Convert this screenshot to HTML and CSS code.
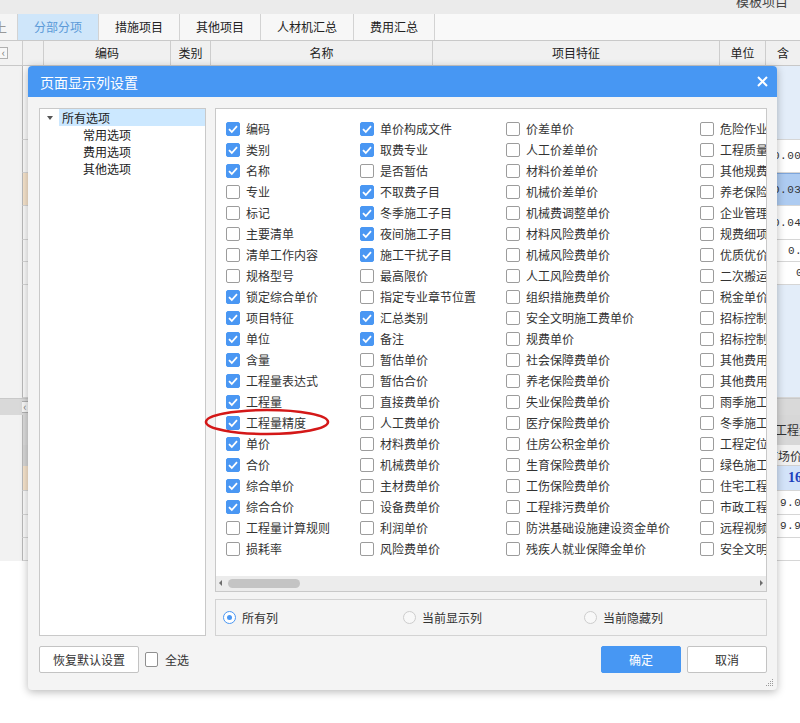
FILE: index.html
```html
<!DOCTYPE html>
<html lang="zh-CN">
<head>
<meta charset="utf-8">
<title>页面显示列设置</title>
<link rel="stylesheet" href="styles.css">
</head>
<body>
<div class="app">
  <div class="topbar"><span class="proj">模板项目</span></div>
  <div class="tabs">
    <div class="tab-stub">上</div>
    <div class="tab active">分部分项</div>
    <div class="tab">措施项目</div>
    <div class="tab">其他项目</div>
    <div class="tab">人材机汇总</div>
    <div class="tab">费用汇总</div>
    <div class="tab-fill"></div>
  </div>
  <div class="ghead">
    <div class="gut"><span class="collapse">&lsaquo;</span></div>
    <div class="hc w21"></div>
    <div class="hc w127">编码</div>
    <div class="hc w40">类别</div>
    <div class="hc w222">名称</div>
    <div class="hc w287">项目特征</div>
    <div class="hc w46">单位</div>
    <div class="hc wrest">含</div>
  </div>
  <div class="row h74 blue-l"><div class="gut"></div><div class="ind"></div><div class="rc"></div></div>
  <div class="row h33"><div class="gut"></div><div class="ind"></div><div class="rc"><span class="num n1">0.009</span></div></div>
  <div class="row h33 sel"><div class="gut"></div><div class="ind"></div><div class="rc"><span class="num n1">0.039</span></div></div>
  <div class="row h34"><div class="gut"></div><div class="ind"></div><div class="rc"><span class="num n1">0.042</span></div></div>
  <div class="row h22"><div class="gut"></div><div class="ind"></div><div class="rc"><span class="num n2">0.</span></div></div>
  <div class="row h23"><div class="gut"></div><div class="ind"></div><div class="rc"><span class="num n3">0</span></div></div>
  <div class="row h113 blue-l"><div class="gut"></div><div class="ind"></div><div class="rc"></div></div>
  <div class="splitter"><span class="collapse">&lsaquo;</span></div>
  <div class="ltabs"><div class="gut"></div><div class="ind"></div><div class="lt"><span class="lt-text">工程量</span></div></div>
  <div class="lhead"><div class="gut"></div><div class="ind g"></div><div class="lh"><span class="lh-text">市场价</span></div></div>
  <div class="row h25 sel2"><div class="gut"></div><div class="ind"></div><div class="rc"><span class="num n4">16</span></div></div>
  <div class="row h24"><div class="gut"></div><div class="ind"></div><div class="rc"><span class="num n5">9.0</span></div></div>
  <div class="row h23"><div class="gut"></div><div class="ind"></div><div class="rc"><span class="num n5">9.9</span></div></div>
  <div class="row h23"><div class="gut"></div><div class="ind"></div><div class="rc"></div></div>
</div>

<div class="dialog">
  <div class="dlg-title">
    <span>页面显示列设置</span>
    <svg class="close" width="11" height="11" viewBox="0 0 11 11"><path d="M1 1L10 10M10 1L1 10" stroke="#fff" stroke-width="2"/></svg>
  </div>
  <div class="dlg-body">
    <div class="tree">
      <div class="tnode root"><span class="caret"></span><span class="tlabel">所有选项</span></div>
      <div class="tnode child">常用选项</div>
      <div class="tnode child">费用选项</div>
      <div class="tnode child">其他选项</div>
    </div>
    <div class="right">
      <div class="cols-panel">
        <div class="cols-grid">
          <label class="ck on"><i></i>编码</label>
          <label class="ck on"><i></i>类别</label>
          <label class="ck on"><i></i>名称</label>
          <label class="ck"><i></i>专业</label>
          <label class="ck"><i></i>标记</label>
          <label class="ck"><i></i>主要清单</label>
          <label class="ck"><i></i>清单工作内容</label>
          <label class="ck"><i></i>规格型号</label>
          <label class="ck on"><i></i>锁定综合单价</label>
          <label class="ck on"><i></i>项目特征</label>
          <label class="ck on"><i></i>单位</label>
          <label class="ck on"><i></i>含量</label>
          <label class="ck on"><i></i>工程量表达式</label>
          <label class="ck on"><i></i>工程量</label>
          <label class="ck on"><i></i>工程量精度</label>
          <label class="ck on"><i></i>单价</label>
          <label class="ck on"><i></i>合价</label>
          <label class="ck on"><i></i>综合单价</label>
          <label class="ck on"><i></i>综合合价</label>
          <label class="ck"><i></i>工程量计算规则</label>
          <label class="ck"><i></i>损耗率</label>

          <label class="ck on"><i></i>单价构成文件</label>
          <label class="ck on"><i></i>取费专业</label>
          <label class="ck"><i></i>是否暂估</label>
          <label class="ck on"><i></i>不取费子目</label>
          <label class="ck on"><i></i>冬季施工子目</label>
          <label class="ck on"><i></i>夜间施工子目</label>
          <label class="ck on"><i></i>施工干扰子目</label>
          <label class="ck"><i></i>最高限价</label>
          <label class="ck"><i></i>指定专业章节位置</label>
          <label class="ck on"><i></i>汇总类别</label>
          <label class="ck on"><i></i>备注</label>
          <label class="ck"><i></i>暂估单价</label>
          <label class="ck"><i></i>暂估合价</label>
          <label class="ck"><i></i>直接费单价</label>
          <label class="ck"><i></i>人工费单价</label>
          <label class="ck"><i></i>材料费单价</label>
          <label class="ck"><i></i>机械费单价</label>
          <label class="ck"><i></i>主材费单价</label>
          <label class="ck"><i></i>设备费单价</label>
          <label class="ck"><i></i>利润单价</label>
          <label class="ck"><i></i>风险费单价</label>

          <label class="ck"><i></i>价差单价</label>
          <label class="ck"><i></i>人工价差单价</label>
          <label class="ck"><i></i>材料价差单价</label>
          <label class="ck"><i></i>机械价差单价</label>
          <label class="ck"><i></i>机械费调整单价</label>
          <label class="ck"><i></i>材料风险费单价</label>
          <label class="ck"><i></i>机械风险费单价</label>
          <label class="ck"><i></i>人工风险费单价</label>
          <label class="ck"><i></i>组织措施费单价</label>
          <label class="ck"><i></i>安全文明施工费单价</label>
          <label class="ck"><i></i>规费单价</label>
          <label class="ck"><i></i>社会保障费单价</label>
          <label class="ck"><i></i>养老保险费单价</label>
          <label class="ck"><i></i>失业保险费单价</label>
          <label class="ck"><i></i>医疗保险费单价</label>
          <label class="ck"><i></i>住房公积金单价</label>
          <label class="ck"><i></i>生育保险费单价</label>
          <label class="ck"><i></i>工伤保险费单价</label>
          <label class="ck"><i></i>工程排污费单价</label>
          <label class="ck"><i></i>防洪基础设施建设资金单价</label>
          <label class="ck"><i></i>残疾人就业保障金单价</label>

          <label class="ck"><i></i>危险作业意外伤害保险费单价</label>
          <label class="ck"><i></i>工程质量检测费单价</label>
          <label class="ck"><i></i>其他规费单价</label>
          <label class="ck"><i></i>养老保险统筹费单价</label>
          <label class="ck"><i></i>企业管理费单价</label>
          <label class="ck"><i></i>规费细项单价</label>
          <label class="ck"><i></i>优质优价费单价</label>
          <label class="ck"><i></i>二次搬运费单价</label>
          <label class="ck"><i></i>税金单价</label>
          <label class="ck"><i></i>招标控制价单价</label>
          <label class="ck"><i></i>招标控制价合价</label>
          <label class="ck"><i></i>其他费用单价</label>
          <label class="ck"><i></i>其他费用合价</label>
          <label class="ck"><i></i>雨季施工增加费单价</label>
          <label class="ck"><i></i>冬季施工增加费单价</label>
          <label class="ck"><i></i>工程定位复测费单价</label>
          <label class="ck"><i></i>绿色施工安全防护措施费单价</label>
          <label class="ck"><i></i>住宅工程质量分户验收费单价</label>
          <label class="ck"><i></i>市政工程施工干扰费单价</label>
          <label class="ck"><i></i>远程视频监控费单价</label>
          <label class="ck"><i></i>安全文明施工费单价</label>
        </div>
        <div class="hscroll">
          <span class="arr left"></span>
          <span class="thumb"></span>
          <span class="arr right"></span>
        </div>
      </div>
      <div class="radio-panel">
        <label class="rd on"><i></i>所有列</label>
        <label class="rd"><i></i>当前显示列</label>
        <label class="rd"><i></i>当前隐藏列</label>
      </div>
    </div>
  </div>
  <div class="dlg-foot">
    <button class="btn">恢复默认设置</button>
    <label class="ck small"><i></i>全选</label>
    <span class="spacer"></span>
    <button class="btn primary">确定</button>
    <button class="btn">取消</button>
  </div>
  <svg class="grip" width="8" height="8" viewBox="0 0 8 8"><g fill="#9a9a9a"><rect x="6" y="0" width="1" height="1"/><rect x="4" y="2" width="1" height="1"/><rect x="6" y="2" width="1" height="1"/><rect x="2" y="4" width="1" height="1"/><rect x="4" y="4" width="1" height="1"/><rect x="6" y="4" width="1" height="1"/><rect x="0" y="6" width="1" height="1"/><rect x="2" y="6" width="1" height="1"/><rect x="4" y="6" width="1" height="1"/><rect x="6" y="6" width="1" height="1"/></g></svg>
</div>

<svg class="mark" width="130" height="34" viewBox="0 0 130 34"><ellipse cx="64" cy="17" rx="61" ry="12" fill="none" stroke="#d41818" stroke-width="2.6"/></svg>
</body>
</html>
```

FILE: styles.css
```css
* { box-sizing: border-box; }
html, body {
  margin: 0;
  padding: 0;
}
body {
  width: 800px;
  height: 723px;
  overflow: hidden;
  position: relative;
  background: #ffffff;
  font-family: "Noto Sans CJK SC", "Noto Sans", sans-serif;
  font-size: 12px;
  color: #333;
}

/* ---------- background application ---------- */
.app { width: 800px; }
.topbar {
  height: 14px;
  background: #ebebeb;
  position: relative;
  overflow: hidden;
}
.proj {
  position: absolute;
  right: 12px;
  top: -9px;
  font-size: 13px;
  color: #444;
  white-space: nowrap;
}
.tabs {
  height: 27px;
  display: flex;
  background: #ebebeb;
  border-bottom: 1px solid #c9c9c9;
}
.tab-stub {
  width: 18px;
  color: #999;
  border-right: 1px solid #d3d3d3;
  background: #f5f5f5;
  text-indent: -6px;
  line-height: 26px;
  overflow: hidden;
  font-size: 13px;
}
.tab {
  padding: 0 16px;
  line-height: 26px;
  font-size: 12px;
  color: #222;
  background: #f7f7f7;
  border-right: 1px solid #d3d3d3;
  white-space: nowrap;
}
.tab.active {
  background: #cfe6fa;
  color: #5b9ad8;
}
.tab-fill { flex: 1; background: #f9f9f9; }

.ghead {
  height: 25px;
  display: flex;
  background: #f0f0f0;
  border-bottom: 1px solid #c8c8c8;
}
.gut {
  width: 22px;
  flex: none;
  background: #f2f2f2;
  position: relative;
}
.collapse {
  position: absolute;
  left: 0;
  top: 6px;
  width: 8px;
  height: 12px;
  border: 1px solid #b0b0b0;
  border-left: none;
  background: #f7f7f7;
  color: #777;
  font-size: 11px;
  line-height: 9px;
  text-align: center;
}
.hc {
  flex: none;
  border-left: 1px solid #cdcdcd;
  text-align: center;
  line-height: 24px;
  font-size: 12px;
  color: #222;
  white-space: nowrap;
}
.w21 { width: 21px; }
.w127 { width: 127px; }
.w40 { width: 40px; }
.w222 { width: 222px; }
.w287 { width: 287px; }
.w46 { width: 46px; }
.wrest { flex: 1; }

.row { display: flex; }
.row .ind {
  width: 21px;
  flex: none;
  border-left: 1px solid #b9b9b9;
  border-bottom: 1px solid #d6d6d6;
  background: #fafafa;
}
.row .rc {
  flex: 1;
  background: #fff;
  border-bottom: 1px solid #d6d6d6;
  border-left: 1px solid #e2e2e2;
  position: relative;
  font-family: "Liberation Mono", monospace;
  font-size: 11px;
}
.h74 { height: 74px; }
.h33 { height: 33px; }
.h34 { height: 34px; }
.h22 { height: 22px; }
.h23 { height: 23px; }
.h24 { height: 24px; }
.h25 { height: 25px; }
.h113 { height: 113px; }
.blue-l .rc { background: #e3edf9; }
.sel .ind { background: #f6e3cb; }
.sel .rc { background: #adcbf1; border-top: 1px solid #7ea6db; }
.sel2 .ind { background: #f6e3cb; }
.sel2 .rc { background: #d3e3f9; }
.num {
  position: absolute;
  top: 50%;
  transform: translateY(-50%);
  color: #333;
  letter-spacing: 0.5px;
  white-space: nowrap;
}
.n1 { left: 729px; }
.n2 { left: 744px; }
.n3 { left: 752px; }
.n4 { left: 744px; color: #1c3fbd; font-weight: bold; font-family: "Liberation Serif", serif; font-size: 14px; letter-spacing: 0; }
.n5 { left: 736px; }

.splitter {
  height: 17px;
  background: #d9d9d9;
  position: relative;
  border-top: 1px solid #c9c9c9;
}
.splitter .collapse { left: 22px; top: 2px; width: 7px; }
.ltabs, .lhead { display: flex; }
.ltabs { height: 30px; }
.ltabs .gut { background: #f2f2f2; }
.ltabs .ind { width: 21px; background: #dadada; border-left: 1px solid #b9b9b9; }
.lt {
  flex: 1;
  background: #d7d7d7;
  position: relative;
}
.lt-text { position: absolute; left: 732px; top: 6px; font-size: 12px; color: #333; white-space: nowrap; }
.lhead { height: 21px; }
.lhead .ind { width: 21px; background: #d6d6d6; border-left: 1px solid #b9b9b9; }
.lh { flex: 1; background: #f1f1f1; position: relative; border-bottom: 1px solid #d0d0d0; }
.lh-text { position: absolute; left: 723px; top: 2px; font-size: 12px; color: #333; white-space: nowrap; }

/* ---------- dialog ---------- */
.dialog {
  position: absolute;
  left: 28px;
  top: 66px;
  width: 749px;
  height: 624px;
  background: #f4f4f4;
  border-radius: 4px;
  box-shadow: 0 2px 8px rgba(0, 0, 0, 0.28);
  display: flex;
  flex-direction: column;
  overflow: hidden;
}
.dlg-title {
  height: 31px;
  flex: none;
  background: #4797f3;
  color: #fff;
  font-size: 14px;
  display: flex;
  align-items: center;
  justify-content: space-between;
  padding: 0 9px 0 12px;
}
.close { display: block; }
.dlg-body {
  display: flex;
  gap: 9px;
  padding: 11px 10px 0 11px;
  height: 539px;
  flex: none;
}
.tree {
  width: 167px;
  height: 528px;
  border: 1px solid #c9c9c9;
  background: #fff;
  flex: none;
}
.tnode {
  height: 17px;
  line-height: 17px;
  font-size: 12px;
  color: #222;
  white-space: nowrap;
}
.tnode.root { display: flex; align-items: center; padding-left: 7px; }
.caret {
  width: 0;
  height: 0;
  border-left: 3.5px solid transparent;
  border-right: 3.5px solid transparent;
  border-top: 4px solid #555;
  margin-right: 6px;
}
.tlabel {
  flex: 1;
  background: #cce8ff;
  padding-left: 3px;
  height: 17px;
}
.tnode.child { padding-left: 43px; }

.right {
  flex: 1;
  min-width: 0;
  display: flex;
  flex-direction: column;
  gap: 7px;
  height: 528px;
}
.cols-panel {
  height: 484px;
  flex: none;
  border: 1px solid #c9c9c9;
  background: #fff;
  display: flex;
  flex-direction: column;
  overflow: hidden;
}
.cols-grid {
  flex: 1;
  min-height: 0;
  overflow: hidden;
  padding: 9px 0 0 10px;
  display: grid;
  grid-auto-flow: column;
  grid-template-rows: repeat(21, 21px);
  grid-template-columns: 134px 146px 194px 240px;
  align-content: start;
}
.ck {
  display: flex;
  align-items: center;
  gap: 6px;
  white-space: nowrap;
  font-size: 12px;
  color: #333;
  overflow: hidden;
}
.ck i {
  width: 14px;
  height: 14px;
  flex: none;
  border: 1px solid #9c9c9c;
  border-radius: 2px;
  background: #fff;
}
.ck.on i {
  border-color: #4a97f3;
  background: #4a97f3 url("data:image/svg+xml;utf8,<svg xmlns='http://www.w3.org/2000/svg' width='14' height='14' viewBox='0 0 14 14'><polyline points='3,7.2 5.8,10 11,4.2' fill='none' stroke='white' stroke-width='1.8'/></svg>") center / 14px 14px no-repeat;
}
.hscroll {
  height: 15px;
  flex: none;
  background: #ececec;
  position: relative;
}
.thumb {
  position: absolute;
  left: 12px;
  top: 3px;
  width: 72px;
  height: 9px;
  border-radius: 5px;
  background: #c4c4c4;
}
.arr {
  position: absolute;
  top: 4px;
  width: 0;
  height: 0;
  border-top: 3.5px solid transparent;
  border-bottom: 3.5px solid transparent;
}
.arr.left { left: 3px; border-right: 3px solid #6d6d6d; }
.arr.right { right: 3px; border-left: 3px solid #6d6d6d; }

.radio-panel {
  height: 37px;
  flex: none;
  border: 1px solid #d3d3d3;
  display: flex;
  align-items: center;
  padding-left: 7px;
}
.rd {
  width: 180px;
  flex: none;
  display: flex;
  align-items: center;
  gap: 6px;
  font-size: 12px;
  color: #333;
}
.rd:nth-child(2) { width: 181px; }
.rd i {
  width: 13px;
  height: 13px;
  border-radius: 50%;
  border: 1px solid #cdcdcd;
  background: #f8f8f8;
  position: relative;
}
.rd.on i { border-color: #4a97f3; background: #fff; }
.rd.on i::after {
  content: "";
  position: absolute;
  left: 3px;
  top: 3px;
  width: 5px;
  height: 5px;
  border-radius: 50%;
  background: #4a97f3;
}

.dlg-foot {
  display: flex;
  align-items: center;
  padding: 10px 10px 0 11px;
}
.btn {
  height: 27px;
  width: 80px;
  border: 1px solid #c3c3c3;
  border-radius: 2px;
  background: #fff;
  font-family: "Noto Sans CJK SC", "Noto Sans", sans-serif;
  font-size: 12px;
  color: #333;
  padding: 0;
}
.btn:first-child { width: 100px; }
.btn.primary {
  background: #4797f3;
  border-color: #4797f3;
  color: #fff;
  margin-right: 6px;
}
.ck.small { margin-left: 6px; gap: 7px; }
.ck.small i { width: 13px; height: 15px; border-color: #8f8f8f; }
.spacer { flex: 1; }
.grip { position: absolute; right: 3px; bottom: 3px; }

.mark {
  position: absolute;
  left: 203px;
  top: 405px;
}
```
